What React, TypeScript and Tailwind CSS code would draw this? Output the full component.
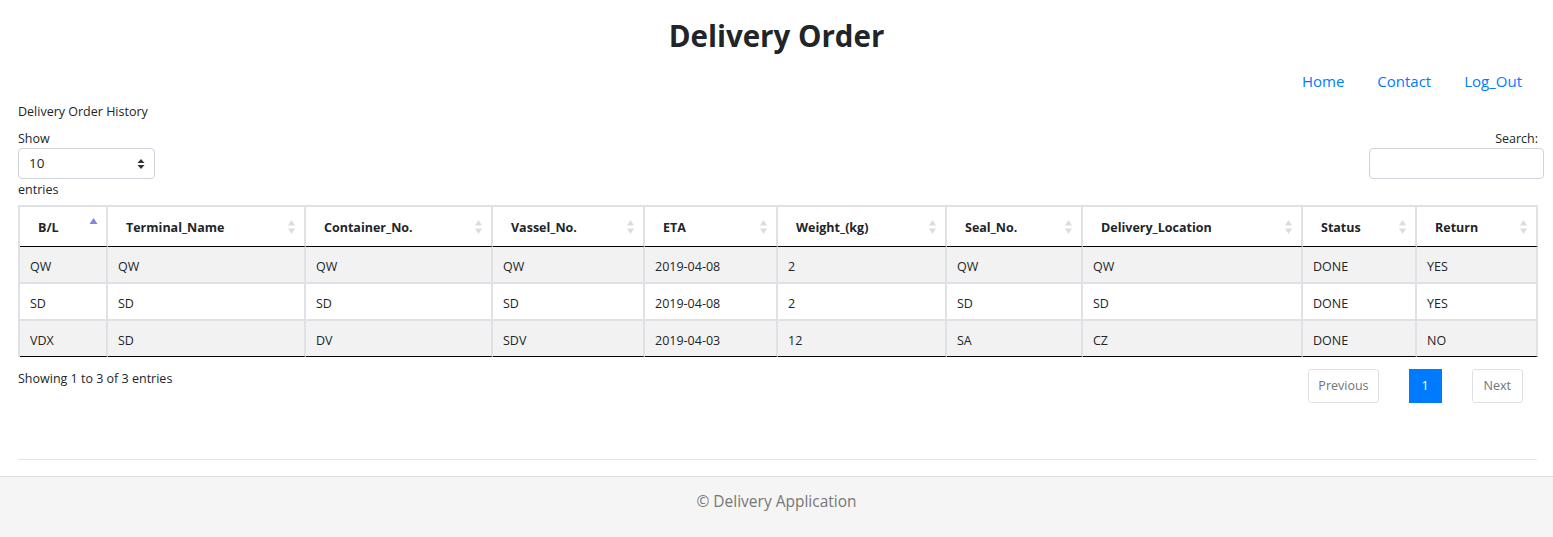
import React from 'react';

const columns = [
  { label: 'B/L', w: 'w-[88px]', active: true },
  { label: 'Terminal_Name', w: 'w-[198px]' },
  { label: 'Container_No.', w: 'w-[187px]' },
  { label: 'Vassel_No.', w: 'w-[152px]' },
  { label: 'ETA', w: 'w-[133px]' },
  { label: 'Weight_(kg)', w: 'w-[169px]' },
  { label: 'Seal_No.', w: 'w-[136px]' },
  { label: 'Delivery_Location', w: 'w-[220px]' },
  { label: 'Status', w: 'w-[114px]' },
  { label: 'Return', w: 'w-[121px]' },
];

const rows = [
  ['QW', 'QW', 'QW', 'QW', '2019-04-08', '2', 'QW', 'QW', 'DONE', 'YES'],
  ['SD', 'SD', 'SD', 'SD', '2019-04-08', '2', 'SD', 'SD', 'DONE', 'YES'],
  ['VDX', 'SD', 'DV', 'SDV', '2019-04-03', '12', 'SA', 'CZ', 'DONE', 'NO'],
];

function SortIcon({ active }: { active?: boolean }) {
  if (active) {
    return (
      <svg width="9" height="16" viewBox="0 0 9 16" className="absolute right-[8px] top-[10px]">
        <path d="M4.5 1 L8.5 7 L0.5 7 Z" fill="#8585e0" />
      </svg>
    );
  }
  return (
    <svg width="9" height="16" viewBox="0 0 9 16" className="absolute right-[8px] top-[12px]">
      <path d="M4.5 1 L8 6.5 L1 6.5 Z" fill="#dcdcdc" />
      <path d="M4.5 15 L8 9.5 L1 9.5 Z" fill="#dcdcdc" />
    </svg>
  );
}

export default function App() {
  return (
    <div
      className="min-h-[537px] bg-white text-[#212529] flex flex-col"
      style={{ fontFamily: '"Open Sans", "Noto Sans", Arial, sans-serif' }}
    >
      <header className="pt-[12px]">
        <h1 className="text-center text-[29.5px] font-bold leading-[48px] text-[#212529]">Delivery Order</h1>
        <nav className="flex justify-end gap-[33px] pr-[31px] mt-[9px] text-[15px] leading-[24px]">
          <a className="text-[#007bff]" href="#">Home</a>
          <a className="text-[#007bff]" href="#">Contact</a>
          <a className="text-[#007bff]" href="#">Log_Out</a>
        </nav>
      </header>

      <main className="pl-[18px] pr-[9px] mt-[10px] text-[12.5px]">
        <p className="leading-[18px]">Delivery Order History</p>

        <div className="flex justify-between mt-[9px]">
          <div className="flex flex-col">
            <span className="leading-[18px]">Show</span>
            <div className="w-[137px] h-[31px] border border-[#ced4da] rounded-[4px] flex items-center justify-between pl-[10px] pr-[9px] text-[13.5px]">
              <span>10</span>
              <svg width="8" height="12" viewBox="0 0 8 12">
                <path d="M4 1 L7.5 5 L0.5 5 Z" fill="#333" />
                <path d="M4 11 L7.5 7 L0.5 7 Z" fill="#333" />
              </svg>
            </div>
            <span className="leading-[20px] mt-[1px]">entries</span>
          </div>
          <div className="flex flex-col items-end">
            <span className="leading-[18px] pr-[6px]">Search:</span>
            <div className="w-[175px] h-[31px] border border-[#ced4da] rounded-[4px]" />
          </div>
        </div>

        <table className="mt-[5px] mr-[7px] table-fixed border-separate border-spacing-0 border-l-2 border-t-2 border-[#dee2e6] w-[1520px]">
          <thead>
            <tr>
              {columns.map((c) => (
                <th
                  key={c.label}
                  className={`${c.w} relative text-left font-bold text-[12.5px] leading-[18px] pt-[12px] pb-[9px] pl-[18px] pr-[24px] border-r-2 border-r-[#dee2e6] border-b border-b-black`}
                >
                  {c.label}
                  <SortIcon active={c.active} />
                </th>
              ))}
            </tr>
          </thead>
          <tbody>
            {rows.map((r, i) => (
              <tr key={i} className={i % 2 === 0 ? 'bg-[#f2f2f2]' : 'bg-white'}>
                {r.map((v, j) => (
                  <td
                    key={j}
                    className={`text-[12.5px] leading-[19px] pt-[10px] pb-[6px] px-[10px] border-r-2 border-r-[#dee2e6] ${
                      i === rows.length - 1 ? 'border-b border-b-black' : 'border-b-2 border-b-[#dee2e6]'
                    }`}
                  >
                    {v}
                  </td>
                ))}
              </tr>
            ))}
          </tbody>
        </table>

        <div className="flex justify-between items-start mt-[12px] pr-[21px]">
          <span className="leading-[18px] mt-[1px]">Showing 1 to 3 of 3 entries</span>
          <div className="flex items-center gap-[30px] text-[12.5px]">
            <span className="h-[34px] px-[9px] flex items-center border border-[#dee2e6] rounded-[3px] text-[#6c757d]">Previous</span>
            <span className="h-[34px] w-[33px] flex items-center justify-center bg-[#007bff] text-white">1</span>
            <span className="h-[34px] px-[11px] flex items-center border border-[#dee2e6] rounded-[3px] text-[#6c757d]">Next</span>
          </div>
        </div>
      </main>

      <div className="mx-[18px] mr-[16px] mt-[56px] border-t border-[#e5e5e5]" />

      <footer className="mt-[16px] flex-1 bg-[#f5f5f5] border-t border-[#dddddd] flex justify-center pt-[12px]">
        <span className="text-[15.5px] leading-[24px] text-[#777777]">© Delivery Application</span>
      </footer>
    </div>
  );
}
